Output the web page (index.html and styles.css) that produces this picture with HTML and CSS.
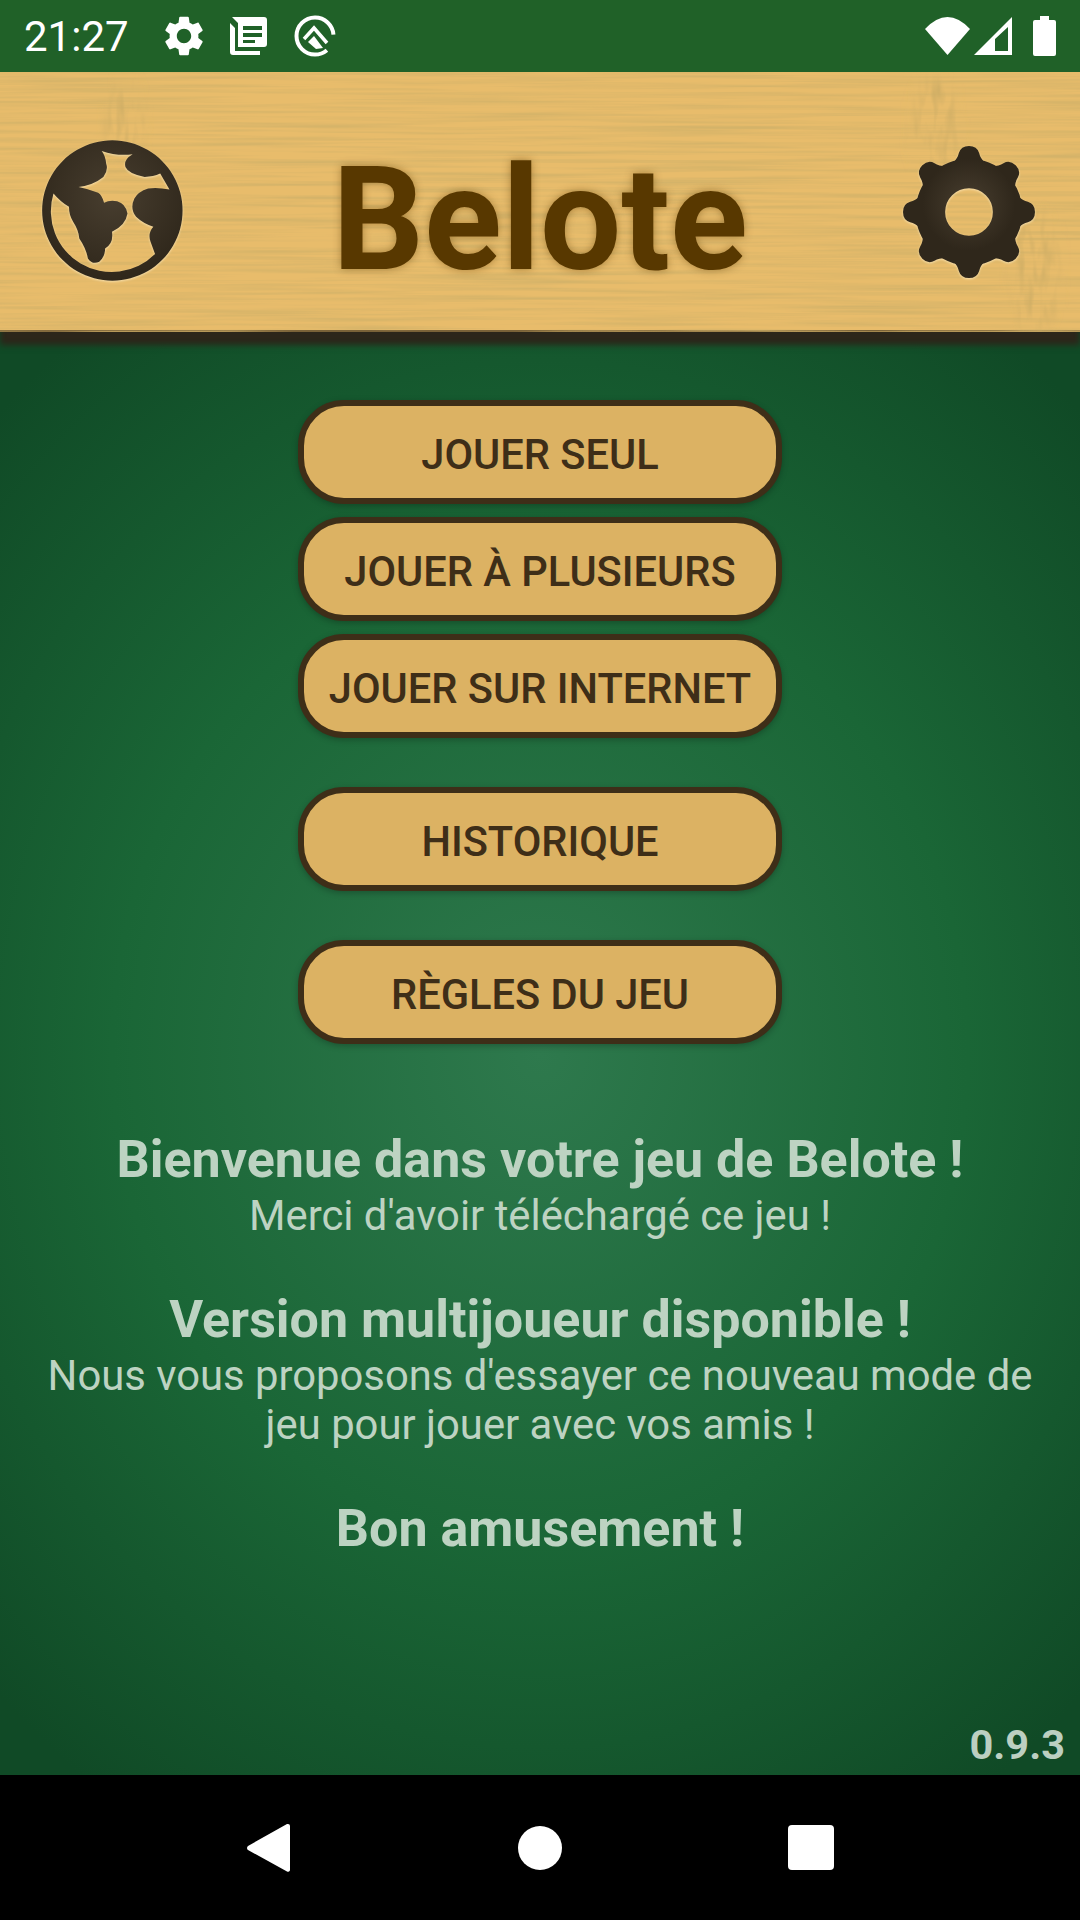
FILE: index.html
```html
<!DOCTYPE html>
<html lang="fr">
<head>
    <meta charset="UTF-8">
    <meta name="viewport" content="width=device-width, initial-scale=1.0">
    <title>Belote</title>
    <link rel="stylesheet" href="styles.css">
</head>
<body>
<div class="screen">

    <!-- Status bar -->
    <div class="status-bar">
        <div class="status-left">
            <span class="clock">21:27</span>
            <svg class="ic-gear" viewBox="2 2 20 20"><path fill="#fff" d="M19.14 12.94c.04-.3.06-.61.06-.94 0-.32-.02-.64-.07-.94l2.03-1.58c.18-.14.23-.41.12-.61l-1.92-3.32c-.12-.22-.37-.29-.59-.22l-2.39.96c-.5-.38-1.03-.7-1.62-.94l-.36-2.54c-.04-.24-.24-.41-.48-.41h-3.84c-.24 0-.43.17-.47.41l-.36 2.54c-.59.24-1.13.57-1.62.94l-2.39-.96c-.22-.08-.47 0-.59.22L2.74 8.87c-.12.21-.08.47.12.61l2.03 1.58c-.05.3-.09.63-.09.94s.02.64.07.94l-2.03 1.58c-.18.14-.23.41-.12.61l1.92 3.32c.12.22.37.29.59.22l2.39-.96c.5.38 1.03.7 1.62.94l.36 2.54c.05.24.24.41.48.41h3.84c.24 0 .44-.17.47-.41l.36-2.54c.59-.24 1.13-.56 1.62-.94l2.39.96c.22.08.47 0 .59-.22l1.92-3.32c.12-.22.07-.47-.12-.61l-2.01-1.58zM12 15.6c-1.98 0-3.6-1.62-3.6-3.6s1.62-3.6 3.6-3.6 3.6 1.62 3.6 3.6-1.62 3.6-3.6 3.6z"/></svg>
            <svg class="ic-news" viewBox="0 0 38 38"><path fill="#fff" fill-rule="evenodd" d="M2 0H34a3 3 0 0 1 3 3V27a3 3 0 0 1-3 3H8V6zM13 9V13H32V9zM13 16V20H32V16zM13 23V26H25V23z"/><path fill="#fff" d="M0 6L5 11V34H30V38H3a3 3 0 0 1-3-3z"/></svg>
            <svg class="ic-q" viewBox="0 0 42 42"><circle cx="21" cy="21" r="18.500" fill="none" stroke="#fff" stroke-width="4" stroke-dasharray="98 18" stroke-dashoffset="-16"/><path fill="none" stroke="#fff" stroke-width="3.500" d="M10 24L20 13L33 28"/><path fill="#fff" d="M14 27L20 21L29 33L22 34z"/></svg>
        </div>
        <div class="status-right">
            <svg class="ic-wifi" viewBox="0 0 45 38"><path fill="#fff" d="M22.500 38L0 12Q22.500 -12 45 12z"/></svg>
            <svg class="ic-signal" viewBox="0 0 38 38"><path fill="#fff" fill-rule="evenodd" d="M38 0V38H0zM34 10L21 22V34H34z"/></svg>
            <svg class="ic-battery" viewBox="0 0 23 40"><path fill="#fff" d="M7 0h9v4h5a2 2 0 0 1 2 2v32a2 2 0 0 1-2 2H2a2 2 0 0 1-2-2V6a2 2 0 0 1 2-2h5z"/></svg>
        </div>
    </div>

    <!-- Wood header -->
    <header class="wood">
        <svg class="wood-grain" width="1080" height="260">
            <filter id="grain" x="0" y="0" width="100%" height="100%">
                <feTurbulence type="fractalNoise" baseFrequency="0.005 0.24" numOctaves="3" seed="7"/>
                <feColorMatrix type="matrix" values="0 0 0 0 0.66  0 0 0 0 0.45  0 0 0 0 0.14  2.2 0 0 0 -0.85"/>
            </filter>
            <filter id="knot" x="-30%" y="-30%" width="160%" height="160%">
                <feGaussianBlur in="SourceGraphic" stdDeviation="7" result="soft"/>
                <feTurbulence type="fractalNoise" baseFrequency="0.12 0.03" numOctaves="2" seed="3"/>
                <feColorMatrix type="matrix" values="0 0 0 0 0.62  0 0 0 0 0.42  0 0 0 0 0.13  2.2 0 0 0 -0.95"/>
                <feComposite in2="soft" operator="in"/>
            </filter>
            <rect width="1080" height="260" filter="url(#grain)"/>
            <ellipse cx="125" cy="50" rx="18" ry="40" filter="url(#knot)"/>
            <ellipse cx="935" cy="55" rx="22" ry="50" filter="url(#knot)"/>
            <ellipse cx="1035" cy="200" rx="22" ry="60" filter="url(#knot)"/>
        </svg>
        <svg class="globe" viewBox="110 410 430 445" preserveAspectRatio="none">
            <defs>
                <radialGradient id="darkFill" cx="50%" cy="40%" r="60%">
                    <stop offset="0" stop-color="#483e2f"/>
                    <stop offset="1" stop-color="#2f271b"/>
                </radialGradient>
            </defs>
            <path fill="url(#darkFill)" fill-rule="evenodd" d="M326 420a204 211 0 1 0 .01 0z
                M295 452Q340 468 385 462Q358 478 364 500Q372 520 420 530Q445 530 465 520L492 568Q455 560 430 565Q400 575 390 595Q376 625 395 650Q415 670 445 680Q428 700 437 725L450 762A177 183 0 0 1 155 580Q175 605 200 620Q200 645 212 665Q228 690 230 715Q250 745 255 775Q268 795 288 785Q305 770 305 745Q330 730 325 695Q365 675 370 640Q365 610 340 603Q318 598 302 608Q296 585 285 578Q255 565 228 560Q270 555 300 530Q315 510 308 490Q306 465 295 452z"/>
        </svg>
        <h1 class="title">Belote</h1>
        <svg class="cog" viewBox="-66 -66 132 132">
            <defs>
                <path id="tooth" d="M-16-48Q-11-53-10-58Q-8-65 0-65Q8-65 10-58Q11-53 16-48z"/>
            </defs>
            <g fill="#2f271b">
                <use href="#tooth"/>
                <use href="#tooth" transform="rotate(45)"/>
                <use href="#tooth" transform="rotate(90)"/>
                <use href="#tooth" transform="rotate(135)"/>
                <use href="#tooth" transform="rotate(180)"/>
                <use href="#tooth" transform="rotate(225)"/>
                <use href="#tooth" transform="rotate(270)"/>
                <use href="#tooth" transform="rotate(315)"/>
            </g>
            <circle r="38" fill="none" stroke="url(#darkFill)" stroke-width="29"/>
        </svg>
    </header>

    <!-- Menu -->
    <main class="menu">
        <div class="btn-group">
            <button class="btn" type="button">JOUER SEUL</button>
            <button class="btn" type="button">JOUER À PLUSIEURS</button>
            <button class="btn" type="button">JOUER SUR INTERNET</button>
        </div>
        <button class="btn btn-apart" type="button">HISTORIQUE</button>
        <button class="btn btn-apart" type="button">RÈGLES DU JEU</button>

        <div class="welcome">
            <p class="lead">Bienvenue dans votre jeu de Belote !</p>
            <p class="sub">Merci d'avoir téléchargé ce jeu !</p>
            <p class="lead lead-gap">Version multijoueur disponible !</p>
            <p class="sub">Nous vous proposons d'essayer ce nouveau mode de jeu pour jouer avec vos amis !</p>
            <p class="lead lead-gap">Bon amusement !</p>
        </div>

        <span class="version">0.9.3</span>
    </main>

    <!-- Navigation bar -->
    <nav class="nav-bar">
        <svg class="nav-back" viewBox="0 0 43 50"><path fill="#fff" d="M41 1a2 2 0 0 1 2 2V47a2 2 0 0 1-3 1.500L1 27a2.500 2.500 0 0 1 0-4L40 1z"/></svg>
        <span class="nav-home"></span>
        <span class="nav-recent"></span>
    </nav>
</div>
</body>
</html>
```

FILE: styles.css
```css
/* Global */
body {
    margin: 0;
    font-family: Roboto, "Liberation Sans", sans-serif;
}

.screen {
    width: 1080px;
    height: 1920px;
    display: flex;
    flex-direction: column;
    overflow: hidden;
}

/* Status bar */
.status-bar {
    height: 72px;
    flex: none;
    background-color: #206128;
    display: flex;
    justify-content: space-between;
    align-items: center;
    padding: 0 24px;
    color: #fff;
}

.status-left,
.status-right {
    display: flex;
    align-items: center;
}

.status-left {
    gap: 26px;
}

.clock {
    font-size: 42px;
    width: 114px;
}

.ic-gear { width: 40px; height: 40px; }
.ic-news { width: 38px; height: 38px; }
.ic-q { width: 42px; height: 42px; }
.ic-wifi { width: 45px; height: 38px; }
.ic-signal { width: 38px; height: 38px; margin-left: 4px; }
.ic-battery { width: 23px; height: 40px; margin-left: 21px; }

/* Wood header */
.wood {
    height: 260px;
    flex: none;
    box-sizing: border-box;
    position: relative;
    z-index: 1;
    background-color: #e8bc6b;
    border-bottom: 2px solid #7a6238;
    box-shadow: 0 13px 6px #2c261a;
    display: grid;
    grid-template-columns: 1fr auto 1fr;
    align-items: center;
    padding: 19px 44px 0;
}

.wood-grain {
    position: absolute;
    left: 0;
    top: 0;
}

.globe,
.cog,
.title {
    position: relative;
}

.globe {
    width: 148px;
    height: 148px;
    margin-left: -6px;
    filter: drop-shadow(0 1px 1px rgba(255, 240, 200, 0.7));
}

.cog {
    width: 134px;
    height: 134px;
    margin-top: 3px;
    justify-self: end;
    filter: drop-shadow(0 1px 1px rgba(255, 240, 200, 0.7));
}

.title {
    margin: 19px 0 0;
    font-size: 144px;
    font-weight: 700;
    line-height: 170px;
    color: #583800;
    text-shadow: 0 0 8px rgba(88, 56, 0, 0.45);
}

/* Menu */
.menu {
    flex: 1;
    display: flex;
    flex-direction: column;
    align-items: center;
    padding-top: 68px;
    background: radial-gradient(ellipse 72% 62% at 50% 50%, #2e794d 0%, #1a6636 55%, #104a26 100%);
    position: relative;
}

.btn-group {
    display: flex;
    flex-direction: column;
    gap: 13px;
}

.btn {
    width: 484px;
    height: 104px;
    box-sizing: border-box;
    border: 6px solid #3e2e18;
    border-radius: 46px;
    background-color: #dcb263;
    color: #3e2e18;
    font-family: inherit;
    font-size: 41.6px;
    font-weight: 500;
    padding: 4px 0 0;
    box-shadow: 0 2px 6px rgba(0, 0, 0, 0.25);
}

.btn-apart {
    margin-top: 49px;
}

/* Welcome text */
.welcome {
    width: 1020px;
    margin-top: 85px;
    text-align: center;
    color: #bdd3c2;
}

.welcome p {
    margin: 0;
}

.lead {
    font-size: 52px;
    font-weight: 700;
    line-height: 62px;
}

.lead-gap {
    margin-top: 49px !important;
}

.sub {
    font-size: 41.8px;
    line-height: 49px;
}

.version {
    margin-top: auto;
    align-self: flex-end;
    margin-right: 15px;
    margin-bottom: 6px;
    font-size: 41.5px;
    font-weight: 700;
    color: #bccfc1;
}

/* Navigation bar */
.nav-bar {
    height: 145px;
    flex: none;
    background-color: #000;
    position: relative;
    display: flex;
    align-items: center;
    justify-content: center;
    gap: 226px;
}

.nav-back {
    width: 43px;
    height: 50px;
    margin-right: 2px;
}

.nav-home {
    width: 44px;
    height: 44px;
    border-radius: 50%;
    background-color: #fff;
}

.nav-recent {
    width: 46px;
    height: 45px;
    border-radius: 4px;
    background-color: #fff;
}
```
